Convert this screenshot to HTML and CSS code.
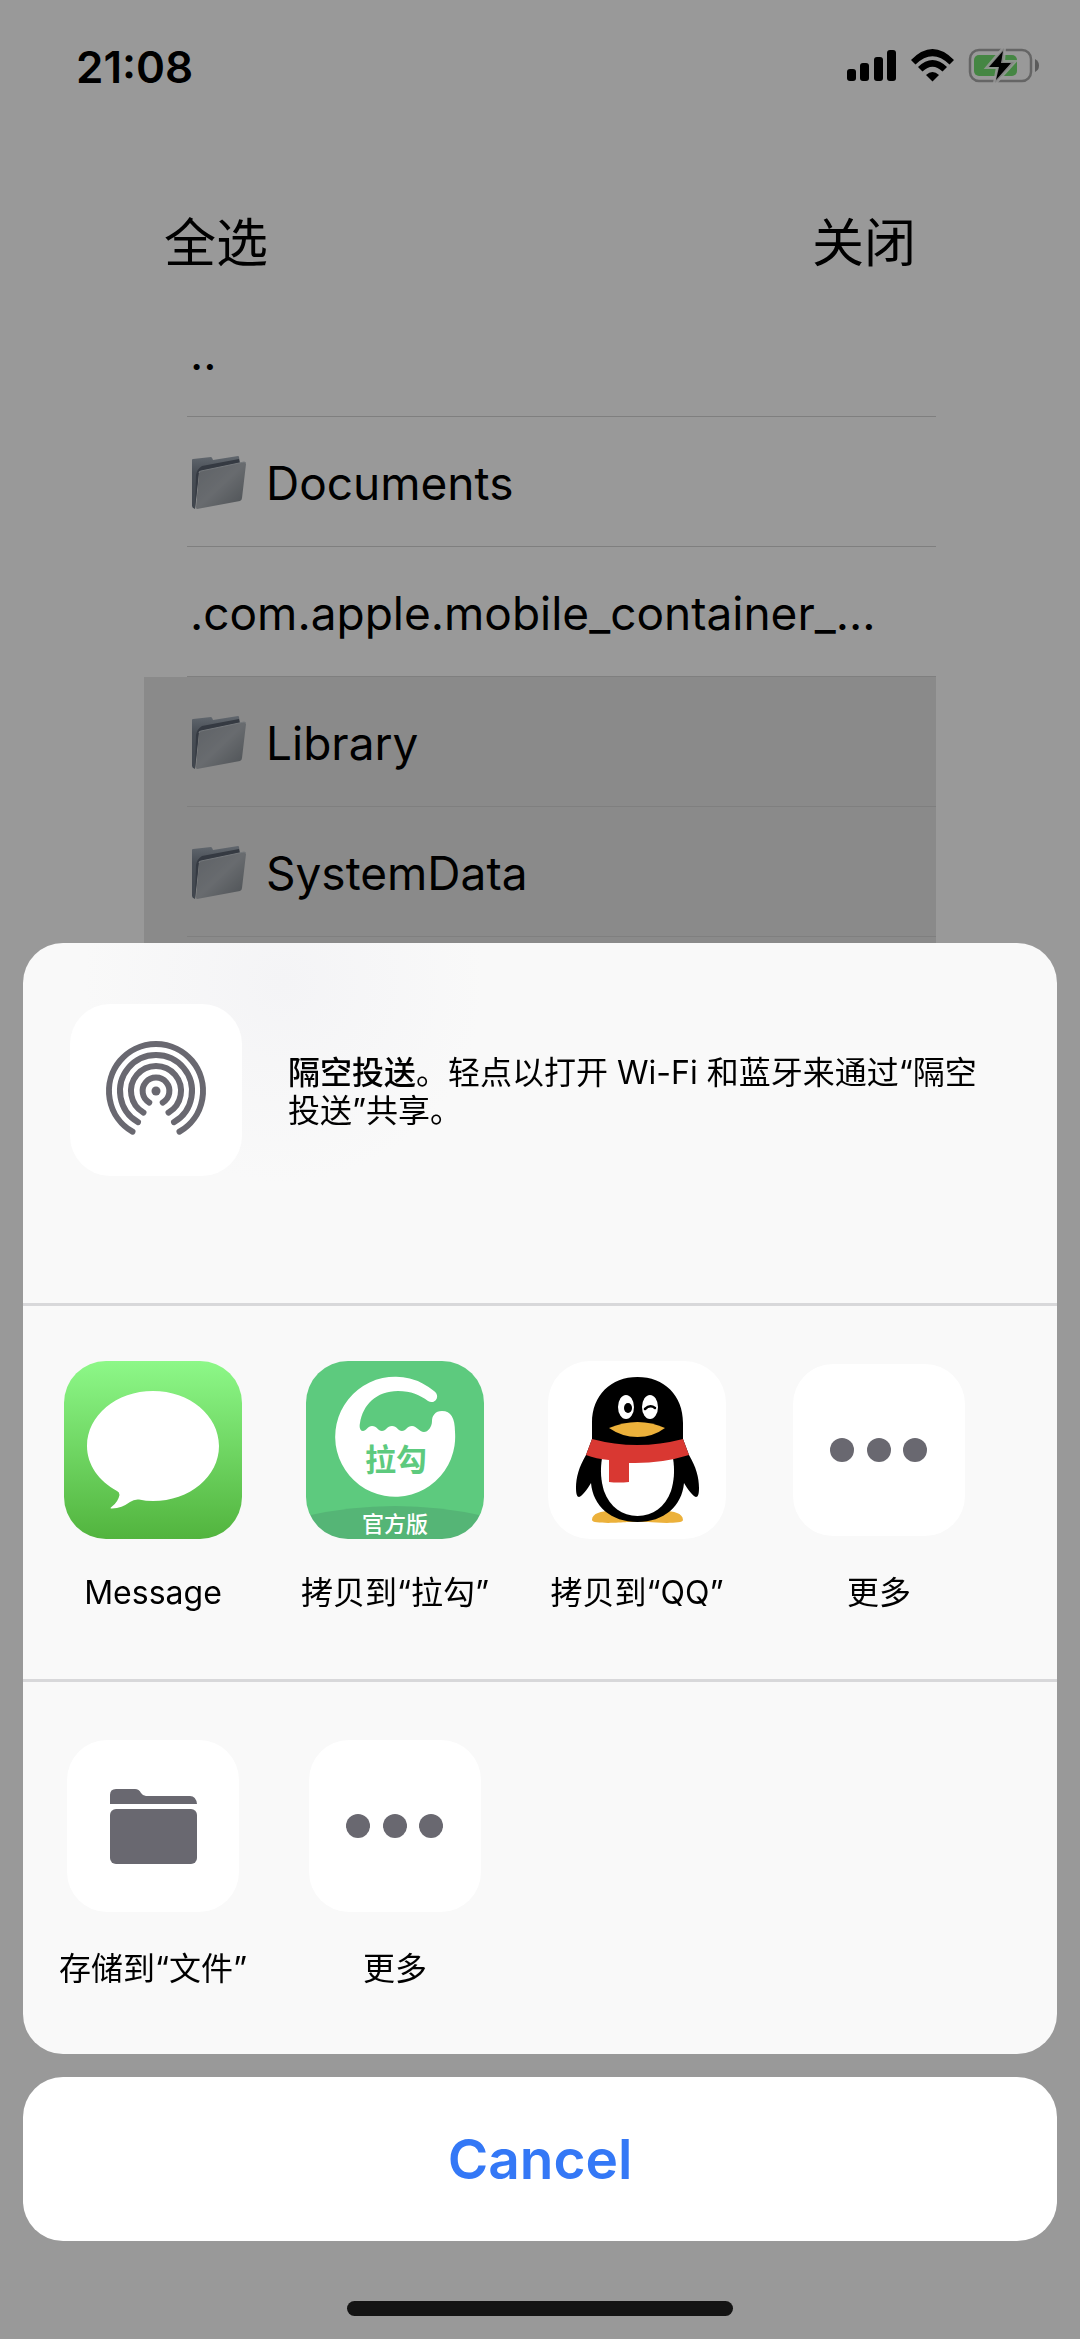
FILE: index.html
```html
<!DOCTYPE html>
<html lang="zh-CN">
<head>
<meta charset="utf-8">
<meta name="viewport" content="width=device-width, initial-scale=1">
<title>文件</title>
<link rel="stylesheet" href="styles.css">
</head>
<body>
<svg class="defs" width="0" height="0" aria-hidden="true">
  <defs>
    <linearGradient id="folder-front" x1="0" y1="0" x2="1" y2="1">
      <stop offset="0" stop-color="#9da3aa"/><stop offset="0.5" stop-color="#aeb3b9"/><stop offset="1" stop-color="#7f868c"/>
    </linearGradient>
    <linearGradient id="folder-back" x1="0" y1="0" x2="0" y2="1">
      <stop offset="0" stop-color="#a3adb8"/><stop offset="0.3" stop-color="#7b8490"/><stop offset="1" stop-color="#6b7480"/>
    </linearGradient>
    <symbol id="folder" viewBox="0 0 56 56">
      <path fill="url(#folder-back)" d="M2 5 Q2 4 3 4L21 2Q22 2 23 5L48 1Q49 1 49 2L50 9L9 17L5 54Q2 53 2 51Z"/>
      <path fill="#59616e" d="M12 11L49 4L50 9L9 17L5 54L6 20Q7 14 12 11Z"/>
      <path fill="url(#folder-front)" d="M9 18Q9 16 11 16L54 7Q56 7 56 9L52 43Q52 45 50 46L7 54Q6 54 6 52Z"/>
      <path fill="none" stroke="#c2c8ce" stroke-width="1" d="M9 18Q9 16 11 16L54 7Q56 7 56 9"/>
    </symbol>
    <symbol id="dots" viewBox="0 0 172 172">
      <g fill="#696870"><circle cx="49" cy="86" r="12"/><circle cx="86" cy="86" r="12"/><circle cx="122" cy="86" r="12"/></g>
    </symbol>
  </defs>
</svg>

<header class="status">
  <time class="clock">21:08</time>
  <svg class="status-icons" width="194" height="36" viewBox="0 0 194 36" role="img" aria-label="信号、无线网络、电池充电中">
    <rect x="0" y="20" width="9" height="12" rx="3"/>
    <rect x="13" y="14" width="9" height="18" rx="3"/>
    <rect x="27" y="8" width="9" height="24" rx="3"/>
    <rect x="40" y="1" width="9" height="31" rx="3"/>
    <path d="M64 11Q85.500 -11 107 11L102.500 15.500Q85.500 -1 68.500 15.500Z"/>
    <path d="M71 18Q85.500 4 100 18L95.500 22.500Q85.500 13 75.500 22.500Z"/>
    <path d="M79 26Q85.500 20 92 26L85.500 32.500Z"/>
    <rect x="123" y="1" width="61" height="31" rx="9" fill="none" stroke="#a9a9a9" stroke-width="2.500"/>
    <path fill="#989898" d="M188 10Q192 12 192 16.500T188 23Z"/>
    <rect x="127" y="6" width="43" height="21" rx="5" fill="#74e070"/>
    <path d="M157 -1L141 18H151L148 34L167 13H156Z" stroke="#fff" stroke-opacity="0.850" stroke-width="4"/>
    <path d="M156 2L142 18H152L149 31L164 14H154Z"/>
  </svg>
</header>

<main class="browser">
  <div class="toolbar">
    <button class="tool" type="button">全选</button>
    <button class="tool" type="button">关闭</button>
  </div>
  <ul class="files">
    <li class="file"><span class="name">..</span></li>
    <li class="file"><span class="name"><svg class="folder" aria-hidden="true"><use href="#folder"/></svg>Documents</span></li>
    <li class="file"><span class="name">.com.apple.mobile_container_...</span></li>
    <li class="file selected"><span class="name"><svg class="folder" aria-hidden="true"><use href="#folder"/></svg>Library</span></li>
    <li class="file selected"><span class="name"><svg class="folder" aria-hidden="true"><use href="#folder"/></svg>SystemData</span></li>
    <li class="file selected"><span class="name"></span></li>
  </ul>
</main>

<div class="backdrop">
  <section class="sheet" role="dialog" aria-label="共享">
    <div class="airdrop">
      <svg class="tile" viewBox="0 0 172 172" aria-hidden="true">
        <g fill="none" stroke="#696870" stroke-width="6" stroke-linecap="round">
          <path d="M62.500 127.700A47 47 0 1 1 109.500 127.700"/>
          <path d="M68 118.200A36 36 0 1 1 104 118.200"/>
          <path d="M73.500 108.600A25 25 0 1 1 98.500 108.600"/>
          <path d="M79.300 98.600A13.400 13.400 0 1 1 92.700 98.600"/>
        </g>
        <circle cx="86" cy="87" r="4.500" fill="#696870"/>
      </svg>
      <p class="hint"><strong>隔空投送</strong>。轻点以打开 Wi-Fi 和蓝牙来通过“隔空投送”共享。</p>
    </div>
    <div class="row">
      <button class="item" type="button">
        <span class="frame">
          <svg class="app" viewBox="0 0 178 178" aria-hidden="true">
            <defs><linearGradient id="msg" x1="0" y1="0" x2="0" y2="1"><stop offset="0" stop-color="#8df888"/><stop offset="1" stop-color="#52b43e"/></linearGradient></defs>
            <rect width="178" height="178" fill="url(#msg)"/>
            <path fill="#fff" d="M89 30C125.500 30 155 54.500 155 85S125.500 140 89 140Q82 140 75 138.500Q70 138 66 141Q58 147 48 147.500Q45 147.500 48 145.500Q54 141 55.500 134Q55.500 131 53 130C35 120 23 104 23 85C23 54.500 52.500 30 89 30Z"/>
          </svg>
        </span>
        <span class="label">Message</span>
      </button>
      <button class="item" type="button">
        <span class="frame">
          <svg class="app" viewBox="0 0 178 178" aria-hidden="true">
            <rect width="178" height="178" fill="#5dca7e"/>
            <path fill="#fff" d="M128 30A60 60 0 1 0 149 71C149 57 145 50 136 50C129 50 126 55 126 60C126 66 122 71 118 71C113 71 111 65 106 65C101 65 100 70 96 70C92 70 91 65 86 65C81 65 80 70 76 70C72 70 71 65 66 65C62 65 60 70 57 70C54 70 53 66 54 62C57 44 70 30 92 30C105 30 114 34 122 40C129 44 135 35 128 30Z"/>
            <path fill="#55b576" d="M0 155Q89 135 178 155V178H0Z"/>
            <text class="logo-name" x="90" y="110" text-anchor="middle">拉勾</text>
            <text class="logo-tag" x="89" y="171" text-anchor="middle">官方版</text>
          </svg>
        </span>
        <span class="label">拷贝到“拉勾”</span>
      </button>
      <button class="item" type="button">
        <span class="frame">
          <svg class="app" viewBox="0 0 178 178" aria-hidden="true">
            <rect width="178" height="178" fill="#fff"/>
            <path fill="#ecb13b" d="M44 159C44 152 54 150 62 150H117C125 150 135 152 135 159C135 163 110 162 100 161H79C69 162 44 163 44 159Z"/>
            <path d="M38 94C31 106 28 116 28 127C28 133 29 136 31 136C34 135 39 129 43 122C45 145 63 161 89.500 161S134 145 136 122C140 129 145 135 148 136C150 136 151 133 151 127C151 116 148 106 141 94L135 78V62C135 34 116 16 89.500 16S44 34 44 62V78Z"/>
            <path fill="#fff" d="M54 97H125C127 110 126 120 123 130C117 146 105 155 89.500 155S62 146 56 130C53 120 52 110 54 97Z"/>
            <ellipse cx="78" cy="46" rx="8" ry="12" fill="#fff"/><ellipse cx="102" cy="46" rx="8" ry="12" fill="#fff"/>
            <ellipse cx="80" cy="47" rx="4" ry="5"/>
            <path fill="none" stroke="#000" stroke-width="2.500" stroke-linecap="round" d="M97 48Q102 43 107 47"/>
            <path fill="#ecb13b" d="M61 67Q75 61 89.500 61T117 67Q105 76 89.500 76T61 67Z"/>
            <path fill="#d93832" d="M44 78Q89 90 135 78L141 94Q112 103 81 102V121Q70 122 61 121V99Q48 98 38 94Z"/>
          </svg>
        </span>
        <span class="label">拷贝到“QQ”</span>
      </button>
      <button class="item" type="button">
        <span class="frame"><svg class="tile" aria-hidden="true"><use href="#dots"/></svg></span>
        <span class="label">更多</span>
      </button>
    </div>
    <div class="row">
      <button class="item" type="button">
        <span class="frame">
          <svg class="tile" viewBox="0 0 172 172" aria-hidden="true">
            <path fill="#696870" d="M43 64V55Q43 49 49 49H68Q72 49 74 53Q76 56 79 56H123Q129 56 130 64Z"/>
            <rect x="43" y="69" width="87" height="55" rx="6" fill="#696870"/>
          </svg>
        </span>
        <span class="label">存储到“文件”</span>
      </button>
      <button class="item" type="button">
        <span class="frame"><svg class="tile" aria-hidden="true"><use href="#dots"/></svg></span>
        <span class="label">更多</span>
      </button>
    </div>
  </section>
  <button class="cancel" type="button">Cancel</button>
  <div class="home-bar"></div>
</div>
</body>
</html>
```
FILE: styles.css
```css
* { box-sizing: border-box; }

body {
  margin: 0;
  min-height: 100vh;
  background: #fff;
  color: #000;
  font-family: Inter, "Noto Sans CJK SC", sans-serif;
}

button {
  margin: 0;
  padding: 0;
  border: 0;
  background: none;
  color: inherit;
  font: inherit;
}

.defs { position: absolute; }

/* Status bar */
.status {
  display: flex;
  align-items: center;
  justify-content: space-between;
  height: 134px;
  padding: 0 39px 0 76px;
}
.clock { font-size: 44px; font-weight: 600; line-height: 52px; }
.status-icons { overflow: visible; }

/* File list */
.browser { margin: 0 144px; }
.toolbar {
  display: flex;
  align-items: center;
  justify-content: space-between;
  height: 153px;
  padding: 66px 20px 0;
}
.tool { height: 84px; font-size: 52px; line-height: 84px; }
.files { margin: 0; padding: 0; list-style: none; }
.file { padding-left: 43px; }
.selected { background: #e6e6e6; }
.name {
  display: flex;
  align-items: center;
  gap: 20px;
  height: 130px;
  padding: 2px 0 0 3px;
  border-bottom: 1px solid #d4d4d4;
  font-size: 46px;
  white-space: nowrap;
}
.folder { flex: none; width: 56px; height: 56px; }

/* Share sheet */
.backdrop {
  position: fixed;
  inset: 0;
  display: flex;
  flex-direction: column;
  justify-content: flex-end;
  padding: 0 23px 23px;
  background: rgba(0, 0, 0, 0.4);
}
.sheet {
  border-radius: 40px;
  background: radial-gradient(circle at 260px 40px, #f4f4f6, #f9f9f9 200px);
}
.airdrop {
  display: flex;
  align-items: flex-start;
  gap: 46px;
  height: 360px;
  padding: 61px 56px 0 47px;
}
.tile {
  flex: none;
  width: 172px;
  height: 172px;
  border-radius: 40px;
  background: #fff;
}
.hint { margin: 50px 0 0; font-size: 32px; line-height: 38px; }
.hint strong { font-weight: 500; }
.row {
  display: flex;
  padding: 55px 9px 67px;
  border-top: 3px solid #d8d8da;
}
.row:last-child { padding-bottom: 66px; }
.item {
  display: flex;
  flex-direction: column;
  align-items: center;
  gap: 35px;
  width: 242px;
}
.frame {
  display: flex;
  align-items: center;
  justify-content: center;
  width: 178px;
  height: 178px;
}
.app { width: 178px; height: 178px; border-radius: 42px; }
.logo-name { fill: #5dca7e; font-size: 31px; font-weight: 700; }
.logo-tag { fill: #fff; font-size: 22px; font-weight: 500; }
.label { font-size: 32px; line-height: 38px; white-space: nowrap; }
.cancel {
  height: 164px;
  margin-top: 23px;
  border-radius: 40px;
  background: #fff;
  color: #3478f6;
  font-size: 55px;
  font-weight: 600;
}
.home-bar {
  align-self: center;
  width: 386px;
  height: 15px;
  margin-top: 60px;
  border-radius: 8px;
  background: #141414;
}
```
